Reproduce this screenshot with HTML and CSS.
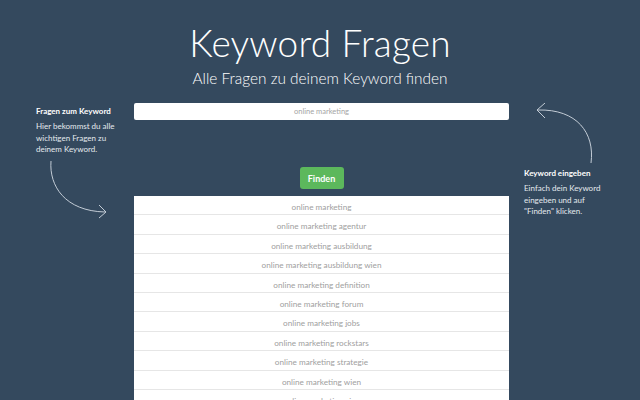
FILE: index.html
```html
<!DOCTYPE html>
<html lang="de">
<head>
    <meta charset="UTF-8">
    <title>Keyword Fragen</title>
    <link rel="stylesheet" href="styles.css">
</head>
<body>
    <header class="header">
        <h1 class="title">Keyword Fragen</h1>
        <p class="subtitle">Alle Fragen zu deinem Keyword finden</p>
    </header>

    <div class="main">
        <!-- left hint -->
        <aside class="hint hint-left">
            <h3>Fragen zum Keyword</h3>
            <p>Hier bekommst du alle wichtigen Fragen zu deinem Keyword.</p>
            <svg class="arrow" width="134" height="66" viewBox="0 0 134 66">
                <path d="M51 5 C49 30 65 55 105 56" fill="none" stroke="#c3ccd6" stroke-width="1"/>
                <path d="M99 49 L106 56 L99 62" fill="none" stroke="#c3ccd6" stroke-width="1"/>
            </svg>
        </aside>

        <!-- search -->
        <section class="search">
            <input class="keyword" type="text" placeholder="online marketing">
            <div class="actions">
                <button class="find">Finden</button>
            </div>
            <ul class="results">
                <li>online marketing</li>
                <li>online marketing agentur</li>
                <li>online marketing ausbildung</li>
                <li>online marketing ausbildung wien</li>
                <li>online marketing definition</li>
                <li>online marketing forum</li>
                <li>online marketing jobs</li>
                <li>online marketing rockstars</li>
                <li>online marketing strategie</li>
                <li>online marketing wien</li>
                <li>online marketing xing</li>
            </ul>
        </section>

        <!-- right hint -->
        <aside class="hint hint-right">
            <svg class="arrow" width="131" height="64" viewBox="0 0 131 64">
                <path d="M82 60 C86 30 68 6 29 7" fill="none" stroke="#c3ccd6" stroke-width="1"/>
                <path d="M36 0 L28 7 L36 15" fill="none" stroke="#c3ccd6" stroke-width="1"/>
            </svg>
            <h3>Keyword eingeben</h3>
            <p>Einfach dein Keyword eingeben und auf "Finden" klicken.</p>
        </aside>
    </div>
</body>
</html>
```

FILE: styles.css
```css
body {
    margin: 0;
    background-color: #34495e;
    font-family: Lato, "Noto Sans", sans-serif;
    color: #fff;
    height: 400px;
    overflow: hidden;
}

/* Header */
.header {
    text-align: center;
    padding-top: 24px;
}
.title {
    margin: 0;
    font-size: 37px;
    font-weight: 300;
    line-height: 37px;
    letter-spacing: 0.2px;
}
.subtitle {
    margin: 8px 0 0;
    font-size: 15.4px;
    font-weight: 300;
    line-height: 18px;
}

/* Three columns */
.main {
    display: grid;
    grid-template-columns: 134px 375px 1fr;
    margin-top: 16px;
}

.hint h3 {
    margin: 0;
    font-size: 8px;
    font-weight: 700;
    line-height: 10px;
}
.hint p {
    margin: 5px 0 0;
    font-size: 8px;
    line-height: 11.5px;
    color: #e4e9ee;
}
.arrow {
    display: block;
}
.hint-left {
    padding-top: 3px;
}
.hint-left h3,
.hint-left p {
    padding-left: 36px;
    width: 84px;
}
.hint-right h3,
.hint-right p {
    padding-left: 15px;
    width: 84px;
}
.hint-right h3 {
    margin-top: 1px;
}

/* Search */
.keyword {
    display: block;
    box-sizing: border-box;
    width: 100%;
    height: 17px;
    border: none;
    border-radius: 2px;
    background: #fff;
    text-align: center;
    font-family: Lato, sans-serif;
    font-size: 7.5px;
    padding: 0;
}
.keyword::placeholder {
    color: #a5a5a5;
}
.actions {
    display: flex;
    justify-content: center;
    margin-top: 47px;
}
.find {
    width: 44px;
    height: 22px;
    padding: 0;
    border: none;
    border-radius: 3px;
    background-color: #5cb85c;
    color: #fff;
    font-family: Lato, sans-serif;
    font-size: 9px;
    font-weight: 700;
    cursor: pointer;
}
.find:hover {
    background-color: #4cae4c;
}

.results {
    list-style: none;
    margin: 7px 0 0;
    padding: 0;
    background: #fff;
}
.results li {
    height: 19.4px;
    line-height: 22px;
    box-sizing: border-box;
    border-bottom: 1px solid #e6e6e6;
    text-align: center;
    font-size: 8.2px;
    color: #a0a0a0;
}
```
